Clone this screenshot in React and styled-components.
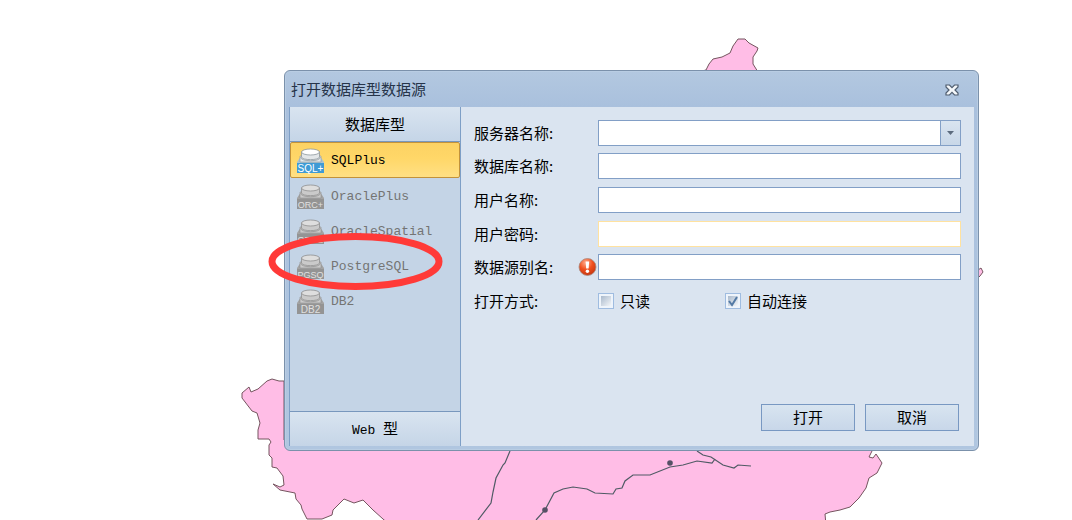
import React, { useState } from "react";
import styled, { createGlobalStyle } from "styled-components";

const GlobalStyle = createGlobalStyle`
  * {
    box-sizing: border-box;
  }
  body {
    margin: 0;
    background: #fff;
    color: #000;
    font: 15px/20px "Noto Sans CJK SC", sans-serif;
  }
  button, input {
    font: inherit;
    color: inherit;
  }
`;

const Workspace = styled.main`
  position: relative;
  min-height: 100vh;
  overflow: hidden;
`;

const MapLayer = styled.svg`
  position: absolute;
  top: 0;
  left: 0;
`;

const Marker = styled.svg`
  position: absolute;
  top: 232px;
  left: 267px;
  pointer-events: none;
`;

const Dialog = styled.section`
  position: absolute;
  top: 70px;
  left: 284px;
  width: 695px;
  padding: 0 4px 4px;
  border: 1px solid #7b91ab;
  border-radius: 6px;
  background: linear-gradient(#b3c8e0, #a9c0dd 36px, #b0c6e0);
  box-shadow: inset 0 0 0 1px #b9cde3;
`;

const TitleBar = styled.header`
  display: flex;
  align-items: center;
  justify-content: space-between;
  height: 36px;
  padding: 0 15px 0 2px;
  color: #263449;
`;

const Title = styled.h1`
  margin: 0;
  font-size: 15px;
  font-weight: 400;
`;

const CloseButton = styled.button`
  display: flex;
  padding: 2px 0 0;
  border: 0;
  background: none;
`;

const Body = styled.div`
  display: flex;
  height: 339px;
  background: #dae4f0;
`;

const Sidebar = styled.nav`
  display: flex;
  flex-direction: column;
  width: 172px;
  border: solid #7e9fc6;
  border-width: 0 1px;
  background: #c4d4e6;
`;

const GroupButton = styled.button`
  height: 35px;
  padding: 0;
  border: solid #7897bd;
  border-width: ${(p) => (p.$bottom ? "1px 0 0" : "0 0 1px")};
  background: linear-gradient(#d9e4f0, #c5d5e7);
`;

const Latin = styled.span`
  font-family: "Liberation Mono", monospace;
  font-size: 13px;
`;

const SourceList = styled.ul`
  flex: 1;
  margin: 0;
  padding: 0;
  list-style: none;
`;

const SourceItem = styled.button`
  display: flex;
  align-items: center;
  gap: 6px;
  width: 100%;
  height: ${(p) => (p.$active ? 36 : 35)}px;
  padding: 2px 6px 0 5px;
  border: 1px solid ${(p) => (p.$active ? "#c2923a" : "transparent")};
  border-radius: 2px;
  background: ${(p) =>
    p.$active ? "linear-gradient(#fcd263, #ffd768 45%, #ffe084)" : "none"};
  color: ${(p) => (p.$active ? "#000" : "#747474")};
  font-family: "Liberation Mono", monospace;
  font-size: 13px;
`;

const Content = styled.form`
  display: flex;
  flex: 1;
  flex-direction: column;
  justify-content: space-between;
  padding: 9px 13px 15px;
`;

const Fields = styled.div`
  display: grid;
  grid-auto-rows: 1fr;
  height: 202px;
`;

const Field = styled.div`
  display: flex;
  align-items: center;
`;

const Label = styled.label`
  width: 104px;
`;

const ErrorSlot = styled.span`
  display: flex;
  width: 20px;
`;

const TextInput = styled.input`
  flex: 1;
  min-width: 0;
  height: 26px;
  padding: 0 6px;
  border: 1px solid ${(p) => (p.$focused ? "#ffe2a0" : "#829fc6")};
  background: #fff;
  outline: none;
`;

const Combo = styled.div`
  display: flex;
  flex: 1;
`;

const ComboButton = styled.button`
  display: flex;
  align-items: center;
  justify-content: center;
  width: 20px;
  height: 26px;
  padding: 0;
  border: 1px solid #829fc6;
  border-left: 0;
  background: linear-gradient(#d9e4f0, #c8d7e8);
`;

const Check = styled.label`
  display: flex;
  align-items: center;
  gap: 6px;
  width: 127px;
`;

const CheckBox = styled.input`
  appearance: none;
  width: 16px;
  height: 16px;
  margin: 0;
  border: 1px solid #9fbce0;
  background: linear-gradient(135deg, #a9b9cc, #f3f6f9) center / 10px 10px no-repeat #eef4fb;

  &:checked {
    background: url("data:image/svg+xml,%3Csvg xmlns='http://www.w3.org/2000/svg' viewBox='0 0 14 14'%3E%3Cpath d='M3 7l3 4 5-8' fill='none' stroke='%23537aa5' stroke-width='2'/%3E%3C/svg%3E") center / 14px 14px no-repeat,
      linear-gradient(135deg, #a9b9cc, #f3f6f9) center / 10px 10px no-repeat #eef4fb;
  }
`;

const Actions = styled.footer`
  display: flex;
  justify-content: flex-end;
  gap: 10px;
  padding-right: 2px;
`;

const ActionButton = styled.button`
  width: 94px;
  height: 27px;
  padding: 0 0 2px;
  border: 1px solid #7898c2;
  background: linear-gradient(#d8e4f0, #c8d7e9);
`;

const sources = [
  { name: "SQLPlus", tag: "SQL+" },
  { name: "OraclePlus", tag: "ORC+" },
  { name: "OracleSpatial", tag: "ORCS" },
  { name: "PostgreSQL", tag: "PGSQ" },
  { name: "DB2", tag: "DB2" },
];

const DatabaseIcon = ({ tag, active }) => {
  const rim = active ? "#8d979d" : "#8f8f8f";
  const side = active ? "#e3e7e9" : "#cacaca";
  return (
    <svg width="29" height="26" viewBox="0 0 29 26" aria-hidden="true">
      <path d="M5 8L1 14v11h27V14l-4-6z" fill={active ? "#a9c4d2" : "#a3a3a3"} />
      <path d="M4 8v6h21V8z" fill={side} stroke={rim} strokeWidth=".6" />
      <path
        d="M4.500 9c0 5 20 5 20 0"
        fill={active ? "#f4f6f7" : "#d6d6d6"}
        stroke={rim}
        strokeWidth=".8"
      />
      <path d="M5.500 4v5c0 3.500 18 3.500 18 0V4z" fill={side} stroke={rim} strokeWidth=".8" />
      <ellipse
        cx="14.500"
        cy="4"
        rx="9"
        ry="3"
        fill={active ? "#fff" : "#dedede"}
        stroke={rim}
        strokeWidth=".8"
      />
      <path d="M1 15h27v10H1z" fill={active ? "#3f9bd5" : "#949494"} />
      <text
        x="14.500"
        y="23.500"
        textAnchor="middle"
        fontFamily="Liberation Sans, sans-serif"
        fontSize={tag === "SQL+" || tag === "DB2" ? 10 : 9}
        fill={active ? "#fff" : "#e0e0e0"}
      >
        {tag}
      </text>
    </svg>
  );
};

const ErrorIcon = () => (
  <svg width="19" height="19" viewBox="0 0 19 19" role="img" aria-label="error">
    <defs>
      <radialGradient id="error" cx=".4" cy=".25" r=".8">
        <stop offset="0" stopColor="#ffab8c" />
        <stop offset=".5" stopColor="#f0501f" />
        <stop offset="1" stopColor="#c03410" />
      </radialGradient>
    </defs>
    <circle cx="9.500" cy="9" r="8.500" fill="url(#error)" stroke="#a98a80" strokeWidth=".8" />
    <path d="M7.600 3.500h3.600l-.6 7H8.200z" fill="#fff" />
    <circle cx="9.400" cy="13.200" r="1.700" fill="#fff" />
  </svg>
);

const MapBackground = () => (
  <MapLayer width="1072" height="520" viewBox="0 0 1072 520" aria-hidden="true">
    <g fill="#ffbde6" stroke="#75555f" strokeWidth="1">
      <path d="M702 71l4-1 3-6 4-5 9-2 8-4 3-7 5-7 7 0 4 4 9 5-1 3-4 6 0 7 5 8z" />
      <path
        d="M284 381L279 381 272 379 267 381 258 389 251 392 249 387 242 393 242 398 252 411
          257 413 260 423 258 430 258 439 269 439 271 442 269 445 269 455 272 458 272 467
          277 468 283 476 284 485 280 487 273 484 280 490 295 493 296 499 301 505 302 509
          307 519 322 519 332 515 333 510 344 499 354 503 363 500 373 510 383 519 390 525
          826 525 825 514 830 512 840 510 850 507 859 498 866 488 869 478 877 473 882 463
          876 454 873 458 869 457 872 451 872 440 284 440z"
      />
      <path d="M978 270l3-2 2 4-3 4-2 2z" />
    </g>
    <g fill="none" stroke="#4f5a64" strokeWidth="1.2">
      <path d="M478 520L491 503 493 492 496 478 503 465 505 463 510 451" />
      <path
        d="M536 520L545 510 554 493 563 489 573 487 587 489 595 493 613 494 616 489 622 488
          625 481 633 475 650 475 670 467 683 465 697 461 712 463 715 459"
      />
      <path d="M697 451L703 455 711 457 723 465 734 468 738 465 751 466" />
    </g>
    <g fill="#555065">
      <circle cx="670" cy="463" r="2.8" />
      <circle cx="545" cy="510" r="2.8" />
    </g>
  </MapLayer>
);

const TextField = ({ id, label, focused, error, type = "text" }) => (
  <Field>
    <Label htmlFor={id}>{label}:</Label>
    <ErrorSlot>{error && <ErrorIcon />}</ErrorSlot>
    <TextInput id={id} type={type} $focused={focused} />
  </Field>
);

const App = () => {
  const [selected, setSelected] = useState("SQLPlus");

  return (
    <Workspace>
      <GlobalStyle />
      <MapBackground />
      <Dialog role="dialog" aria-labelledby="dialog-title">
        <TitleBar>
          <Title id="dialog-title">打开数据库型数据源</Title>
          <CloseButton type="button" aria-label="关闭">
            <svg width="14" height="12" viewBox="0 0 14 12">
              <path
                d="M1 1h3.500L7 3.600 9.500 1H13v2L10 6l3 3v2H9.500L7 8.400 4.500 11H1V9l3-3-3-3z"
                fill="#f4f7fa"
                stroke="#4f5d6f"
                strokeWidth="1.200"
              />
            </svg>
          </CloseButton>
        </TitleBar>
        <Body>
          <Sidebar>
            <GroupButton type="button">数据库型</GroupButton>
            <SourceList>
              {sources.map(({ name, tag }) => (
                <li key={name}>
                  <SourceItem
                    type="button"
                    $active={name === selected}
                    onClick={() => setSelected(name)}
                  >
                    <DatabaseIcon tag={tag} active={name === selected} />
                    {name}
                  </SourceItem>
                </li>
              ))}
            </SourceList>
            <GroupButton type="button" $bottom>
              <Latin>Web </Latin>型
            </GroupButton>
          </Sidebar>
          <Content onSubmit={(e) => e.preventDefault()}>
            <Fields>
              <Field>
                <Label htmlFor="server">服务器名称:</Label>
                <ErrorSlot />
                <Combo>
                  <TextInput id="server" />
                  <ComboButton type="button" aria-label="服务器名称">
                    <svg width="7" height="4" viewBox="0 0 7 4">
                      <path d="M0 0h7L3.500 4z" fill="#5c6b7e" />
                    </svg>
                  </ComboButton>
                </Combo>
              </Field>
              <TextField id="database" label="数据库名称" />
              <TextField id="user" label="用户名称" />
              <TextField id="password" label="用户密码" type="password" focused />
              <TextField id="alias" label="数据源别名" error />
              <Field role="group" aria-labelledby="open-mode">
                <Label as="span" id="open-mode">
                  打开方式:
                </Label>
                <ErrorSlot />
                <Check>
                  <CheckBox type="checkbox" />
                  只读
                </Check>
                <Check>
                  <CheckBox type="checkbox" defaultChecked />
                  自动连接
                </Check>
              </Field>
            </Fields>
            <Actions>
              <ActionButton type="submit">打开</ActionButton>
              <ActionButton type="button">取消</ActionButton>
            </Actions>
          </Content>
        </Body>
      </Dialog>
      <Marker width="177" height="60" viewBox="0 0 177 60" aria-hidden="true">
        <ellipse cx="88.500" cy="29.500" rx="83.500" ry="25" fill="none" stroke="#ff3a38" strokeWidth="7" />
      </Marker>
    </Workspace>
  );
};

export default App;
